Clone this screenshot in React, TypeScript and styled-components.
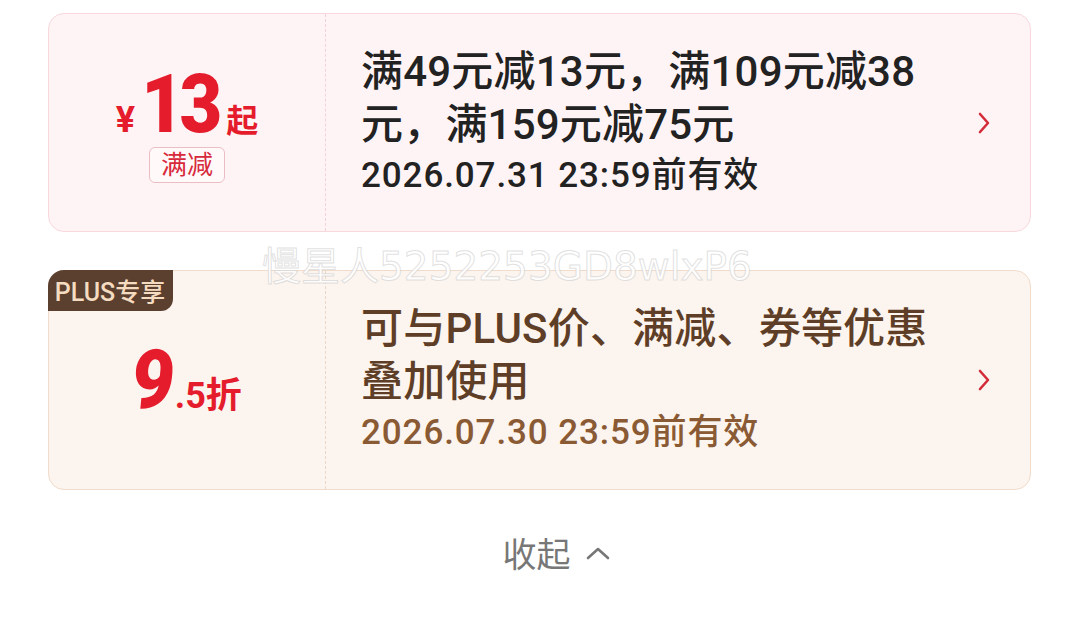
import React from 'react';
import styled, { createGlobalStyle } from 'styled-components';

const GlobalStyle = createGlobalStyle`
  html, body {
    margin: 0;
    padding: 0;
    background: #ffffff;
  }
  body {
    font-family: Roboto, "Noto Sans CJK SC", sans-serif;
  }
`;

const Page = styled.div`
  position: relative;
  width: 1080px;
  height: 622px;
  box-sizing: border-box;
  padding: 13px 49px 0 48px;
  display: flex;
  flex-direction: column;
  gap: 38px;
  overflow: hidden;
`;

const Card = styled.div<{ $plus?: boolean }>`
  position: relative;
  display: flex;
  height: ${({ $plus }) => ($plus ? 220 : 219)}px;
  box-sizing: border-box;
  border-radius: 16px;
  border: 1.5px solid ${({ $plus }) => ($plus ? '#f1dccb' : '#f8d8dd')};
  background: ${({ $plus }) => ($plus ? '#fcf4ee' : '#fff4f5')};
`;

const Amount = styled.div<{ $plus?: boolean }>`
  width: 277px;
  flex-shrink: 0;
  display: flex;
  flex-direction: column;
  align-items: center;
  justify-content: center;
  border-right: 1.5px dashed ${({ $plus }) => ($plus ? '#ead8c8' : '#f3d3d8')};
  box-sizing: border-box;
`;

const PriceRow = styled.div`
  display: flex;
  align-items: baseline;
  color: #e41c2c;
  font-weight: 700;
  line-height: 1;
`;

const Small = styled.span<{ $size: number }>`
  font-size: ${({ $size }) => $size}px;
  font-weight: 700;
`;

const Big = styled.span<{ $slant?: boolean }>`
  font-size: 82px;
  font-weight: 900;
  letter-spacing: -5px;
  display: inline-block;
  transform: scaleX(0.9) ${({ $slant }) => ($slant ? 'skewX(-6deg)' : '')};
  margin-left: ${({ $slant }) => ($slant ? -2 : 2)}px;
  margin-right: ${({ $slant }) => ($slant ? 2 : 4)}px;
`;

const Tag = styled.div`
  margin-top: 2px;
  padding: 1px 11px;
  border: 1.5px solid #ebbec4;
  border-radius: 6px;
  background: #fff9fa;
  color: #d72a3c;
  font-size: 26px;
  line-height: 32px;
`;

const Badge = styled.div`
  position: absolute;
  top: -1.5px;
  left: -1.5px;
  width: 125px;
  height: 41px;
  display: flex;
  align-items: center;
  justify-content: center;
  background: #5b4030;
  color: #f5dcc0;
  font-size: 25px;
  font-weight: 500;
  border-radius: 16px 0 12px 0;
`;

const Body = styled.div`
  flex: 1;
  display: flex;
  flex-direction: column;
  justify-content: center;
  padding: 0 0 0 35px;
`;

const Title = styled.div<{ $plus?: boolean }>`
  max-width: 580px;
  font-size: 42px;
  font-weight: 500;
  line-height: 53px;
  letter-spacing: 0.2px;
  color: ${({ $plus }) => ($plus ? '#5e3e27' : '#222222')};
`;

const Expiry = styled.div<{ $plus?: boolean }>`
  font-size: 35px;
  font-weight: 500;
  line-height: 50px;
  letter-spacing: 0.9px;
  color: ${({ $plus }) => ($plus ? '#8a5a34' : '#222222')};
`;

const Arrow = styled.div`
  width: 92px;
  display: flex;
  align-items: center;
  justify-content: center;
  flex-shrink: 0;
`;

const Collapse = styled.div`
  display: flex;
  justify-content: center;
  align-items: center;
  gap: 14px;
  margin-top: 0;
  padding-left: 34px;
  color: #777777;
  font-size: 34px;
`;

const Watermark = styled.div`
  position: absolute;
  top: 235px;
  left: 262px;
  font-size: 39px;
  font-family: "DejaVu Sans", "Noto Sans CJK SC", sans-serif;
  color: rgba(255, 255, 255, 0.85);
  -webkit-text-stroke: 1px rgba(200, 200, 200, 0.55);
  pointer-events: none;
  white-space: nowrap;
`;

const Chevron = ({ color }: { color: string }) => (
  <svg width="14" height="24" viewBox="0 0 14 24">
    <path d="M3 3 L11 12 L3 21" fill="none" stroke={color} strokeWidth="2.6" strokeLinecap="round" strokeLinejoin="round" />
  </svg>
);

const App = () => (
  <>
    <GlobalStyle />
    <Page>
      <Card>
        <Amount>
          <PriceRow>
            <Small $size={36}>¥</Small>
            <Big>13</Big>
            <Small $size={32}>起</Small>
          </PriceRow>
          <Tag>满减</Tag>
        </Amount>
        <Body>
          <Title>满49元减13元，满109元减38元，满159元减75元</Title>
          <Expiry>2026.07.31 23:59前有效</Expiry>
        </Body>
        <Arrow>
          <Chevron color="#d42b3a" />
        </Arrow>
      </Card>

      <Card $plus>
        <Badge>PLUS专享</Badge>
        <Amount $plus>
          <PriceRow>
            <Big $slant>9</Big>
            <Small $size={36}>.5折</Small>
          </PriceRow>
        </Amount>
        <Body>
          <Title $plus>可与PLUS价、满减、券等优惠叠加使用</Title>
          <Expiry $plus>2026.07.30 23:59前有效</Expiry>
        </Body>
        <Arrow>
          <Chevron color="#d42b3a" />
        </Arrow>
      </Card>

      <Collapse>
        收起
        <svg width="26" height="16" viewBox="0 0 26 16">
          <path d="M3 13 L13 4 L23 13" fill="none" stroke="#777777" strokeWidth="2.6" strokeLinecap="round" strokeLinejoin="round" />
        </svg>
      </Collapse>

      <Watermark>慢星人5252253GD8wlxP6</Watermark>
    </Page>
  </>
);

export default App;
